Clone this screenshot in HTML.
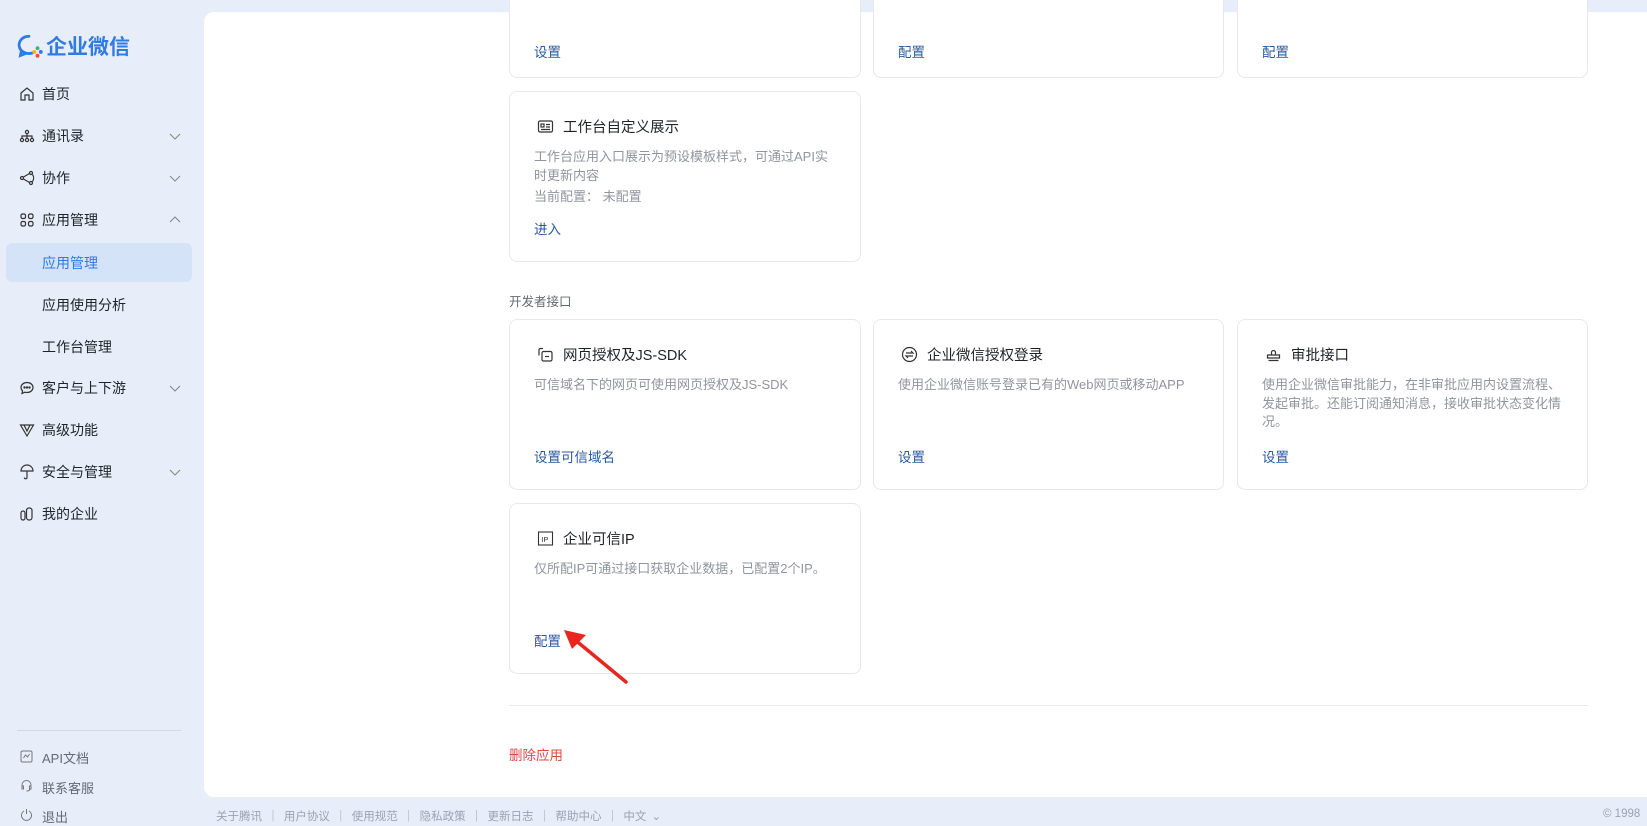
<!DOCTYPE html>
<html><head><meta charset="utf-8"><style>
*{margin:0;padding:0;box-sizing:border-box}
body{width:1647px;height:819px;background:#e8eef9;font-family:"Liberation Sans","Noto Sans CJK SC",sans-serif;position:relative;overflow:hidden;color:#1f2329}
.a{position:absolute;white-space:nowrap}
.side .it{position:absolute;left:19px;font-size:14px;color:#1f2329;display:flex;align-items:center;height:20px}
.side .it svg{width:16px;height:16px;margin-right:7px}
.chev{position:absolute;left:168px;width:14px;height:14px}
.panel{position:absolute;left:204px;top:12px;width:1460px;height:785px;background:#fff;border-radius:10px}
.card{position:absolute;border:1px solid #e6e8eb;border-radius:8px;background:#fff}
.t{position:absolute;left:27px;font-size:14.5px;color:#1f2329;display:flex;align-items:center}
.t svg{width:17px;height:17px;margin-right:9px}
.d{position:absolute;left:24px;font-size:13px;color:#8f959e;line-height:18.5px;white-space:normal}
.l{position:absolute;left:24px;font-size:13.5px;color:#2a5a9e}
.ft{font-size:11.5px;color:#9aa3b0}
</style></head><body>
<div class="side">
<div class="a" style="left:15px;top:31px;display:flex;align-items:center">
<svg width="30" height="28" viewBox="0 0 26 26"><path d="M12 4a9 8 0 1 0 3 15.5" fill="none" stroke="#2f7ae5" stroke-width="2.6" stroke-linecap="round"/><path d="M5 17l-1 5 5-2" fill="none" stroke="#2f7ae5" stroke-width="2.4"/><circle cx="20" cy="15" r="1.8" fill="#36b37e"/><circle cx="17" cy="18.5" r="1.8" fill="#f5b800"/><circle cx="20" cy="22" r="1.8" fill="#e8513d"/><circle cx="23" cy="18.5" r="1.8" fill="#2f7ae5"/></svg>
<span style="font-size:21px;color:#2f7ae5;font-weight:bold;margin-left:1px">企业微信</span></div>
<div class="it" style="top:84px"><svg viewBox="0 0 16 16" fill="none" stroke="#333" stroke-width="1.2"><path d="M2 7l6-5 6 5v7H10V9H6v5H2z"/></svg>首页</div>
<div class="it" style="top:126px"><svg viewBox="0 0 16 16" fill="none" stroke="#333" stroke-width="1.2"><circle cx="8" cy="4" r="1.6"/><circle cx="3" cy="12" r="1.6"/><circle cx="8" cy="12" r="1.6"/><circle cx="13" cy="12" r="1.6"/><path d="M3 10V8h10v2M8 6v4"/></svg>通讯录</div>
<div class="it" style="top:168px"><svg viewBox="0 0 16 16" fill="none" stroke="#333" stroke-width="1.2"><circle cx="12" cy="3" r="1.5"/><circle cx="12" cy="13" r="1.5"/><circle cx="3" cy="8" r="1.5"/><path d="M4.5 7L10.5 3.5M4.5 9l6 3.5M13.5 4.5a6 6 0 0 1 0 7"/></svg>协作</div>
<div class="it" style="top:210px"><svg viewBox="0 0 16 16" fill="none" stroke="#333" stroke-width="1.2"><rect x="2" y="2" width="4.5" height="4.5" rx="1.5"/><rect x="9.5" y="2" width="4.5" height="4.5" rx="1.5"/><rect x="2" y="9.5" width="4.5" height="4.5" rx="1.5"/><rect x="9.5" y="9.5" width="4.5" height="4.5" rx="1.5"/></svg>应用管理</div>
<div class="a" style="left:6px;top:243px;width:186px;height:39px;background:#d4e3f8;border-radius:6px"></div>
<div class="a" style="left:42px;top:253px;font-size:14px;color:#2f7ae5">应用管理</div>
<div class="a" style="left:42px;top:295px;font-size:14px">应用使用分析</div>
<div class="a" style="left:42px;top:337px;font-size:14px">工作台管理</div>
<div class="it" style="top:378px"><svg viewBox="0 0 16 16" fill="none" stroke="#333" stroke-width="1.2"><path d="M8 2.5c3.6 0 6 2.3 6 5s-2.4 5-6 5c-.8 0-1.5-.1-2-.3L3 13.5l.6-2.6C2.6 10 2 8.8 2 7.5c0-2.7 2.4-5 6-5z"/><circle cx="5.5" cy="7.5" r=".6" fill="#333"/><circle cx="8" cy="7.5" r=".6" fill="#333"/><circle cx="10.5" cy="7.5" r=".6" fill="#333"/></svg>客户与上下游</div>
<div class="it" style="top:420px"><svg viewBox="0 0 16 16" fill="none" stroke="#333" stroke-width="1.2"><path d="M1.5 3h13L8 14zM5 3l3 6 3-6"/></svg>高级功能</div>
<div class="it" style="top:462px"><svg viewBox="0 0 16 16" fill="none" stroke="#333" stroke-width="1.2"><path d="M2 7a6 6 0 0 1 12 0zM8 7v6.5a1.3 1.3 0 0 1-2.6 0"/></svg>安全与管理</div>
<div class="it" style="top:504px"><svg viewBox="0 0 16 16" fill="none" stroke="#333" stroke-width="1.2"><rect x="2" y="5" width="4" height="9" rx="2"/><rect x="7.5" y="2" width="5.5" height="12" rx="2.5"/></svg>我的企业</div>
<svg class="chev a" style="top:129px" viewBox="0 0 14 14" fill="none" stroke="#888" stroke-width="1.1"><path d="M2 5l5 5 5-5"/></svg>
<svg class="chev a" style="top:171px" viewBox="0 0 14 14" fill="none" stroke="#888" stroke-width="1.1"><path d="M2 5l5 5 5-5"/></svg>
<svg class="chev a" style="top:213px" viewBox="0 0 14 14" fill="none" stroke="#888" stroke-width="1.1"><path d="M2 9l5-5 5 5"/></svg>
<svg class="chev a" style="top:381px" viewBox="0 0 14 14" fill="none" stroke="#888" stroke-width="1.1"><path d="M2 5l5 5 5-5"/></svg>
<svg class="chev a" style="top:465px" viewBox="0 0 14 14" fill="none" stroke="#888" stroke-width="1.1"><path d="M2 5l5 5 5-5"/></svg>
<div class="a" style="left:17px;top:730px;width:164px;height:1px;background:#d3dae6"></div>
<svg class="a" style="left:20px;top:750px" width="13" height="13" viewBox="0 0 13 13" fill="none" stroke="#777"><rect x="1" y="1" width="11" height="11" rx="1.5"/><path d="M3.5 8l2-3 2 2 2-3"/></svg>
<div class="a" style="left:42px;top:748px;font-size:13px;color:#646a73">API文档</div>
<svg class="a" style="left:20px;top:779px" width="13" height="13" viewBox="0 0 13 13" fill="none" stroke="#777"><path d="M2 8V6a4.5 4.5 0 0 1 9 0v2M2 7h1.5v3H2zM9.5 7H11v3H9.5zM10 10c0 1.5-2 2-3.5 2"/></svg>
<div class="a" style="left:42px;top:778px;font-size:13px;color:#646a73">联系客服</div>
<svg class="a" style="left:20px;top:808px" width="13" height="13" viewBox="0 0 13 13" fill="none" stroke="#777"><path d="M4 3a5 5 0 1 0 5 0M6.5 1v5"/></svg>
<div class="a" style="left:42px;top:807px;font-size:13px;color:#646a73">退出</div>
</div>

<div class="panel"></div>
<div class="card" style="left:509px;top:-10px;width:352px;height:88px"><div class="l" style="top:50px">设置</div></div>
<div class="card" style="left:873px;top:-10px;width:351px;height:88px"><div class="l" style="top:50px">配置</div></div>
<div class="card" style="left:1237px;top:-10px;width:351px;height:88px"><div class="l" style="top:50px">配置</div></div>

<div class="card" style="left:509px;top:91px;width:352px;height:171px">
<div class="t" style="top:24px"><svg viewBox="0 0 17 17" fill="none" stroke="#333" stroke-width="1.2"><rect x="1.5" y="3" width="14" height="11" rx="1.5"/><rect x="4" y="6" width="3" height="3"/><path d="M9 6.5h4M9 9h4M4 11.5h9"/></svg>工作台自定义展示</div>
<div class="d" style="top:56px;width:300px">工作台应用入口展示为预设模板样式，可通过API实时更新内容</div>
<div class="d" style="top:96px">当前配置：&nbsp;未配置</div>
<div class="l" style="top:126px">进入</div></div>

<div class="a" style="left:509px;top:291px;font-size:12.5px;color:#646a73">开发者接口</div>

<div class="card" style="left:509px;top:319px;width:352px;height:171px">
<div class="t" style="top:24px"><svg viewBox="0 0 17 17" fill="none" stroke="#333" stroke-width="1.2"><path d="M6 2.5H3.5a1.5 1.5 0 0 0-1.5 1.5v5.5"/><rect x="5" y="5.5" width="10" height="9.5" rx="1.5"/><path d="M8 10.5h4"/></svg>网页授权及JS-SDK</div>
<div class="d" style="top:56px">可信域名下的网页可使用网页授权及JS-SDK</div>
<div class="l" style="top:126px">设置可信域名</div></div>

<div class="card" style="left:873px;top:319px;width:351px;height:171px">
<div class="t" style="top:24px"><svg viewBox="0 0 17 17" fill="none" stroke="#333" stroke-width="1.2"><circle cx="8.5" cy="8.5" r="7"/><path d="M5 7h7l-2-2M12 10H5l2 2"/></svg>企业微信授权登录</div>
<div class="d" style="top:56px">使用企业微信账号登录已有的Web网页或移动APP</div>
<div class="l" style="top:126px">设置</div></div>

<div class="card" style="left:1237px;top:319px;width:351px;height:171px">
<div class="t" style="top:24px"><svg viewBox="0 0 17 17" fill="none" stroke="#333" stroke-width="1.2"><path d="M6.5 9V6.5a2 2 0 1 1 4 0V9M2.5 9h12v3h-12zM3.5 14.5h10"/></svg>审批接口</div>
<div class="d" style="top:56px;width:305px">使用企业微信审批能力，在非审批应用内设置流程、发起审批。还能订阅通知消息，接收审批状态变化情况。</div>
<div class="l" style="top:126px">设置</div></div>

<div class="card" style="left:509px;top:503px;width:352px;height:171px">
<div class="t" style="top:24px"><svg viewBox="0 0 17 17" fill="none" stroke="#333" stroke-width="1.1"><rect x="1.5" y="2" width="14" height="13"/><text x="4.3" y="12" font-size="7.5" fill="#333" stroke="none" font-family="Liberation Sans">IP</text></svg>企业可信IP</div>
<div class="d" style="top:56px">仅所配IP可通过接口获取企业数据，已配置2个IP。</div>
<div class="l" style="top:126px">配置</div></div>

<svg class="a" style="left:560px;top:625px" width="70" height="60" viewBox="0 0 70 60"><path d="M66 57L14 14" stroke="#e8261f" stroke-width="3.5" stroke-linecap="round"/><path d="M4 5L26 10 12 24z" fill="#e8261f"/></svg>

<div class="a" style="left:509px;top:705px;width:1079px;height:1px;background:#e8eaed"></div>
<div class="a" style="left:509px;top:744px;font-size:13.5px;color:#e04848">删除应用</div>

<div class="a ft" style="left:216px;top:808px;word-spacing:2px">关于腾讯 ｜ 用户协议 ｜ 使用规范 ｜ 隐私政策 ｜ 更新日志 ｜ 帮助中心 ｜ 中文 ⌄</div>
<div class="a ft" style="left:1603px;top:808px">© 1998</div>
</body></html>
